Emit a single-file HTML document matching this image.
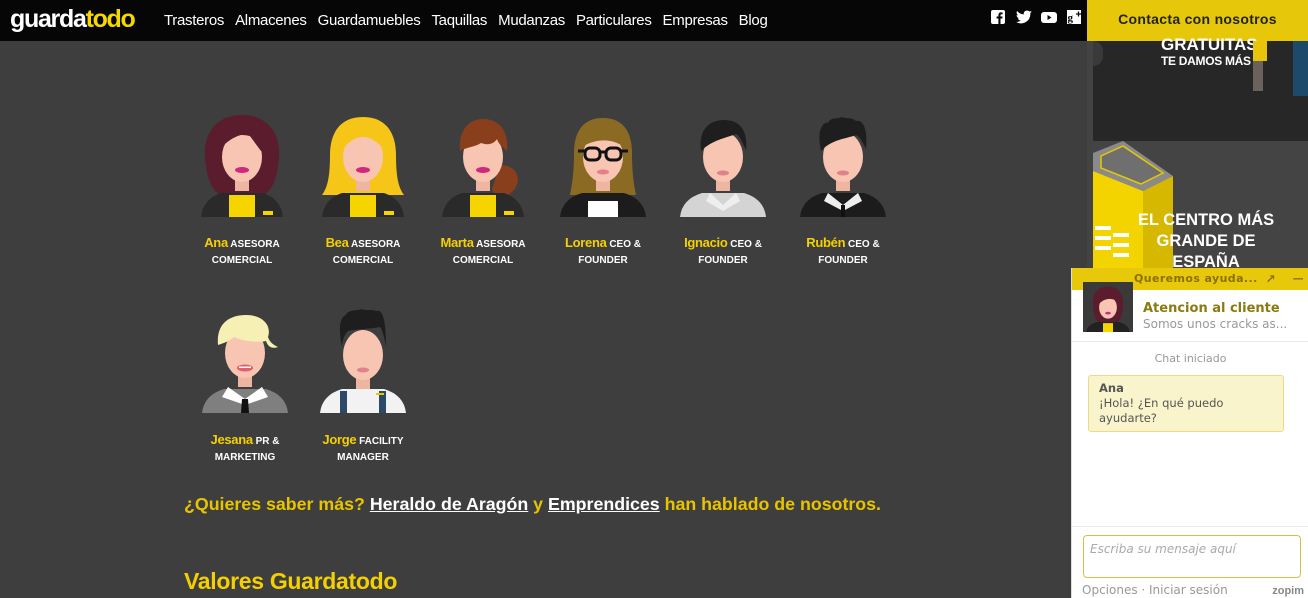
<!DOCTYPE html>
<html><head><meta charset="utf-8">
<style>
*{margin:0;padding:0;box-sizing:border-box}
body{width:1308px;height:598px;overflow:hidden;background:#3e3e3e;font-family:"Liberation Sans",Arial,sans-serif;position:relative}
.nav{position:absolute;left:0;top:0;width:1308px;height:41px;background:#060606}
.logo{position:absolute;left:10px;top:5px;font-size:25px;font-weight:bold;letter-spacing:-1.3px;color:#fff;font-family:"Liberation Sans",sans-serif}
.logo span{color:#f5d800}
.menu{position:absolute;left:164px;top:12px;color:#fff;font-size:15px;letter-spacing:-0.3px}
.menu span{margin-right:11px}
.cta{position:absolute;left:1087px;top:0;width:221px;height:41px;background:#e6c70a;color:#222;font-size:14px;font-weight:bold;text-align:center;line-height:38px;letter-spacing:0.3px}
.soc{position:absolute;top:10px;width:14px;height:14px}
.av{position:absolute}
.lab{position:absolute;width:120px;text-align:center;color:#fff;font-size:10px;font-weight:bold;line-height:16px}
.lab b{color:#f5d000;font-size:13px;letter-spacing:-0.3px}
.side1{position:absolute;left:1093px;top:41px;width:215px;height:100px;background:#272727}
.side0{position:absolute;left:1087px;top:41px;width:6px;height:557px;background:#434343}
.side2{position:absolute;left:1093px;top:141px;width:215px;height:457px;background:#444}
.chat{position:absolute;left:1071px;top:268px;width:237px;height:330px;background:#fff;border-left:1px solid #ddd}
.chh{height:22px;background:#e8c80b;color:#8a7000;font-size:11px;font-weight:bold;padding-left:62px;line-height:22px;letter-spacing:0.4px;font-family:"DejaVu Sans",sans-serif}
</style></head><body>
<div class="nav">
<div class="logo">guarda<span>todo</span></div>
<div class="menu"><span>Trasteros</span><span>Almacenes</span><span>Guardamuebles</span><span>Taquillas</span><span>Mudanzas</span><span>Particulares</span><span>Empresas</span><span>Blog</span></div>
<svg class="soc" style="left:991px" viewBox="0 0 14 14"><rect width="14" height="14" rx="2" fill="#fff"/><path d="M9.5 14V8.5h1.8l.3-2H9.5V5.3c0-.6.2-1 1-1h1.1V2.5c-.2 0-.9-.1-1.6-.1-1.6 0-2.6 1-2.6 2.7v1.4H5.6v2h1.8V14z" fill="#060606"/></svg>
<svg class="soc" style="left:1016px;width:16px" viewBox="0 0 16 14"><path d="M16 2c-.6.3-1.2.4-1.9.5.7-.4 1.2-1 1.4-1.8-.6.4-1.3.6-2.1.8A3.3 3.3 0 0 0 7.8 4.4 9.3 9.3 0 0 1 1.1 1a3.3 3.3 0 0 0 1 4.4c-.5 0-1-.2-1.5-.4 0 1.6 1.1 2.9 2.6 3.2-.5.1-1 .2-1.5.1.4 1.3 1.6 2.3 3.1 2.3A6.6 6.6 0 0 1 0 11.9 9.3 9.3 0 0 0 14.3 3.6V3.2c.7-.4 1.2-.9 1.7-1.2z" fill="#fff"/></svg>
<svg class="soc" style="left:1041px;width:16px" viewBox="0 0 16 14"><rect y="2" width="16" height="11" rx="3" fill="#fff"/><path d="M6.5 5v5l4-2.5z" fill="#060606"/></svg>
<svg class="soc" style="left:1067px" viewBox="0 0 14 14"><rect width="14" height="14" fill="#fff"/><text x="0.5" y="11" font-size="11" font-weight="bold" fill="#060606" font-family="Liberation Serif">g</text><path d="M9 4h5M11.5 1.5v5" stroke="#060606" stroke-width="1.3"/></svg>
</div>
<div class="cta">Contacta con nosotros</div>
<div class="side0"></div>
<div class="side1">
<div style="position:absolute;left:68px;top:-6px;color:#fff;font-weight:bold;font-size:17px">GRATUITAS</div>
<div style="position:absolute;left:68px;top:13px;color:#fff;font-weight:bold;font-size:12px;letter-spacing:-0.3px">TE DAMOS MÁS</div>
<div style="position:absolute;left:160px;top:0;width:14px;height:20px;background:#e8c40a"></div>
<div style="position:absolute;left:160px;top:20px;width:10px;height:30px;background:#6b625e"></div>
<div style="position:absolute;left:200px;top:0;width:15px;height:55px;background:#1d4a6b"></div>
<div style="position:absolute;left:0;top:0;width:10px;height:25px;background:#3a3a3a;border-radius:0 12px 12px 0"></div>
</div>
<div class="side2">
<svg width="215" height="140" style="position:absolute;left:0;top:0"><polygon points="0,12 30,0 80,35 50,50 0,30" fill="#8a8a8a"/><polygon points="8,15 30,5 70,32 48,43 8,27" fill="#6f6f6f" stroke="#e6c700" stroke-width="1.5"/><polygon points="0,30 50,50 50,140 0,140" fill="#f3d400"/><polygon points="50,50 80,35 80,140 50,140" fill="#d6b800"/><g fill="#fff"><rect x="2" y="85" width="16" height="4"/><rect x="2" y="95" width="16" height="4"/><rect x="2" y="105" width="16" height="4"/><rect x="20" y="92" width="16" height="4"/><rect x="20" y="102" width="16" height="4"/><rect x="20" y="112" width="16" height="4"/></g></svg>
<div style="position:absolute;left:38px;top:69px;width:150px;text-align:center;color:#fff;font-weight:bold;font-size:16.5px;line-height:21px">EL CENTRO MÁS GRANDE DE ESPAÑA</div>
</div>

<svg width="0" height="0" style="position:absolute">
<defs>
<g id="face"><rect x="38" y="58" width="14" height="18" fill="#eeb5a0"/><ellipse cx="45" cy="42" rx="20" ry="25" fill="#f7c5b1"/></g>
</defs>
</svg>

<svg class="av" style="left:197px;top:115px" width="90" height="102" viewBox="0 0 90 102">
<path d="M45 0C20 0 6 18 8 42c1 18 6 34 16 38h42c10-4 15-20 16-38C84 18 70 0 45 0z" fill="#5b1c2e"/>
<path d="M4 102Q6 84 24 78L66 78Q84 84 86 102Z" fill="#2a2a2a"/><path d="M32 80h26v22H32z" fill="#f5d400"/><rect x="66" y="96" width="10" height="4" fill="#f5d400"/>
<use href="#face"/><path d="M22 35C30 12 55 8 70 30 62 22 50 20 44 20 36 22 28 28 22 35z" fill="#5b1c2e"/><path d="M45 12c16 0 24 10 26 30-8-4-14-18-26-30z" fill="#5b1c2e"/><ellipse cx="45" cy="55" rx="7" ry="3" fill="#d0297c"/></svg>
<svg class="av" style="left:318px;top:115px" width="90" height="102" viewBox="0 0 90 102">
<path d="M45 2C22 2 12 18 12 40c0 20-2 32-8 40h82c-6-8-8-20-8-40 0-22-10-38-33-38z" fill="#f5c518"/>
<path d="M4 102Q6 84 24 78L66 78Q84 84 86 102Z" fill="#2a2a2a"/><path d="M32 80h26v22H32z" fill="#f5d400"/><rect x="66" y="96" width="10" height="4" fill="#f5d400"/>
<use href="#face"/><path d="M22 38C22 14 34 6 45 6s23 8 23 32C60 26 52 22 45 22S30 26 22 38z" fill="#f5c518"/><ellipse cx="45" cy="55" rx="7" ry="3" fill="#d0297c"/></svg>
<svg class="av" style="left:438px;top:115px" width="90" height="102" viewBox="0 0 90 102">
<path d="M62 50c20 0 24 20 8 30-8 4-14 0-16-6z" fill="#8a3f1c"/>
<path d="M4 102Q6 84 24 78L66 78Q84 84 86 102Z" fill="#2a2a2a"/><path d="M32 80h26v22H32z" fill="#f5d400"/><rect x="66" y="96" width="10" height="4" fill="#f5d400"/>
<use href="#face"/><path d="M22 36C20 14 32 4 45 4s26 8 24 32c-4-4-8-6-10-12-4 6-10 6-16 4-6 4-14 4-21 8z" fill="#8a3f1c"/><ellipse cx="45" cy="55" rx="7" ry="3" fill="#d0297c"/></svg>
<svg class="av" style="left:558px;top:115px" width="90" height="102" viewBox="0 0 90 102">
<path d="M45 3C24 3 16 18 16 38c0 20-2 32-4 42h66c-2-10-4-22-4-42 0-20-8-35-29-35z" fill="#8b6a24"/>
<path d="M2 102Q4 84 24 78L66 78Q86 84 88 102Z" fill="#1c1c1c"/><path d="M30 86h30v16H30z" fill="#fff"/>
<use href="#face"/><path d="M24 32C26 12 40 6 50 8c12 2 18 12 18 26-10-10-28-12-44-2z" fill="#8b6a24"/>
<g fill="none" stroke="#111" stroke-width="3"><rect x="27" y="33" width="15" height="12" rx="5"/><rect x="48" y="33" width="15" height="12" rx="5"/><path d="M42 37h6M20 36h7M63 36h7"/></g><ellipse cx="45" cy="57" rx="6" ry="2.5" fill="#e0828a"/></svg>
<svg class="av" style="left:678px;top:115px" width="90" height="102" viewBox="0 0 90 102">
<path d="M2 102Q4 84 24 78L66 78Q86 84 88 102Z" fill="#d4d4d4"/><path d="M32 78l13 12 13-12 4 8-17 10-17-10z" fill="#eee"/>
<use href="#face"/><path d="M23 36C20 14 32 5 46 5c14 0 24 8 22 30-4-8-6-14-10-16-10 4-24 6-35 17z" fill="#1e1e1e"/><ellipse cx="45" cy="58" rx="6" ry="2.5" fill="#e0828a"/></svg>
<svg class="av" style="left:798px;top:115px" width="90" height="102" viewBox="0 0 90 102">
<path d="M2 102Q4 84 24 78L66 78Q86 84 88 102Z" fill="#1c1c1c"/><path d="M30 78l15 12 15-12 4 8-19 10-19-10z" fill="#eee"/><path d="M43 90h4v12h-4z" fill="#111"/>
<use href="#face"/><path d="M23 36C18 14 26 6 30 8 32 2 40 4 44 2c4 2 10 0 14 4 6-2 12 6 10 28-4-8-6-12-10-14-10 4-24 4-35 16z" fill="#1e1e1e"/><ellipse cx="45" cy="58" rx="6" ry="2.5" fill="#e0828a"/></svg>
<svg class="av" style="left:200px;top:313px" width="90" height="102" viewBox="0 0 90 102">
<path d="M2 100Q4 82 24 76L66 76Q86 82 88 100Z" fill="#7f7f7f"/><path d="M28 74l17 12 17-12 6 10-23 8-23-8z" fill="#fff"/><path d="M42 86h6l1 14h-8z" fill="#111"/>
<use href="#face" transform="translate(0,-2)"/><path d="M18 32C16 10 30 2 46 2c16 0 26 10 22 22 2 6 6 8 10 10-6 2-10 0-12-6-8 2-24 0-32-4-4 4-10 6-16 8z" fill="#f6f0b4"/><ellipse cx="45" cy="55" rx="8" ry="3.5" fill="#e0606a"/><rect x="39" y="53.5" width="12" height="1.5" fill="#fff"/></svg>
<svg class="av" style="left:318px;top:309px" width="90" height="104" viewBox="0 0 90 104">
<path d="M2 104Q4 86 24 80L66 80Q86 86 88 104Z" fill="#f2f2f2"/><path d="M22 82h7v22h-7zM61 82h7v22h-7z" fill="#2b4a68"/><rect x="58" y="84" width="8" height="2" fill="#e8c700"/>
<use href="#face" transform="translate(0,4)"/><path d="M24 38C20 18 22 8 28 6 30 0 40 2 44 0c4 2 10 0 14 2 6-2 10 6 10 36-2-12-4-18-6-20-10 2-24 2-32 4-4 4-6 10-6 16z" fill="#1e1e1e"/><ellipse cx="45" cy="61" rx="6" ry="2.5" fill="#e0828a"/></svg>

<div class="lab" style="left:182px;top:235px"><b>Ana</b> ASESORA<br>COMERCIAL</div>
<div class="lab" style="left:303px;top:235px"><b>Bea</b> ASESORA<br>COMERCIAL</div>
<div class="lab" style="left:423px;top:235px"><b>Marta</b> ASESORA<br>COMERCIAL</div>
<div class="lab" style="left:543px;top:235px"><b>Lorena</b> CEO &amp;<br>FOUNDER</div>
<div class="lab" style="left:663px;top:235px"><b>Ignacio</b> CEO &amp;<br>FOUNDER</div>
<div class="lab" style="left:783px;top:235px"><b>Rubén</b> CEO &amp;<br>FOUNDER</div>
<div class="lab" style="left:185px;top:432px"><b>Jesana</b> PR &amp;<br>MARKETING</div>
<div class="lab" style="left:303px;top:432px"><b>Jorge</b> FACILITY<br>MANAGER</div>

<div style="position:absolute;left:184px;top:494px;color:#e8c400;font-weight:bold;font-size:17.8px">¿Quieres saber más? <u style="color:#fff">Heraldo de Aragón</u> y <u style="color:#fff">Emprendices</u> han hablado de nosotros.</div>
<div style="position:absolute;left:184px;top:568px;color:#f5d000;font-weight:bold;font-size:23px;letter-spacing:-0.3px">Valores Guardatodo</div>

<div class="chat">
<div class="chh">Queremos ayuda...<span style="position:absolute;right:32px;top:0;font-size:12px">↗</span><span style="position:absolute;right:4px;top:0">—</span></div>
<svg style="position:absolute;left:11px;top:14px" width="50" height="50" viewBox="0 0 90 90"><rect width="90" height="90" fill="#3a3a3a"/><path d="M45 8C26 8 16 22 18 42c1 14 4 26 10 30h34c6-4 9-16 10-30C74 22 64 8 45 8z" fill="#5b1c2e"/><path d="M6 90Q8 76 26 72L64 72Q82 76 84 90Z" fill="#222"/><path d="M36 74h18v16H36z" fill="#f5d400"/><ellipse cx="45" cy="46" rx="16" ry="20" fill="#f7c5b1"/><path d="M28 40C34 20 56 18 64 36 52 28 40 28 28 40z" fill="#5b1c2e"/><ellipse cx="45" cy="56" rx="5" ry="2.5" fill="#d0297c"/></svg>
<div style="position:absolute;left:71px;top:33px;color:#8a7a10;font-weight:bold;font-size:13px;font-family:'DejaVu Sans',sans-serif">Atencion al cliente</div>
<div style="position:absolute;left:71px;top:49px;color:#999;font-size:12px;font-family:'DejaVu Sans',sans-serif">Somos unos cracks as...</div>
<div style="position:absolute;left:0;top:73px;width:237px;border-top:1px solid #e8e8e8"></div>
<div style="position:absolute;left:0;top:84px;width:237px;text-align:center;color:#999;font-size:11px;font-family:'DejaVu Sans',sans-serif">Chat iniciado</div>
<div style="position:absolute;left:16px;top:107px;width:196px;height:57px;background:#faf4cc;border:1px solid #eadb8a;border-radius:3px;padding:5px 10px;font-size:11.5px;color:#555;line-height:15px;font-family:'DejaVu Sans',sans-serif"><b>Ana</b><br>¡Hola! ¿En qué puedo ayudarte?</div>
<div style="position:absolute;left:0;top:258px;width:237px;border-top:1px solid #e8e8e8"></div>
<div style="position:absolute;left:11px;top:267px;width:218px;height:43px;border:1px solid #d6c04a;border-radius:4px;padding:6px;color:#aaa;font-style:italic;font-size:12px;font-family:'DejaVu Sans',sans-serif">Escriba su mensaje aquí</div>
<div style="position:absolute;left:10px;top:315px;color:#999;font-size:12px;font-family:'DejaVu Sans',sans-serif">Opciones · Iniciar sesión</div>
<div style="position:absolute;right:4px;top:317px;color:#888;font-size:11px;font-weight:bold">zopim</div>
</div>
</body></html>
